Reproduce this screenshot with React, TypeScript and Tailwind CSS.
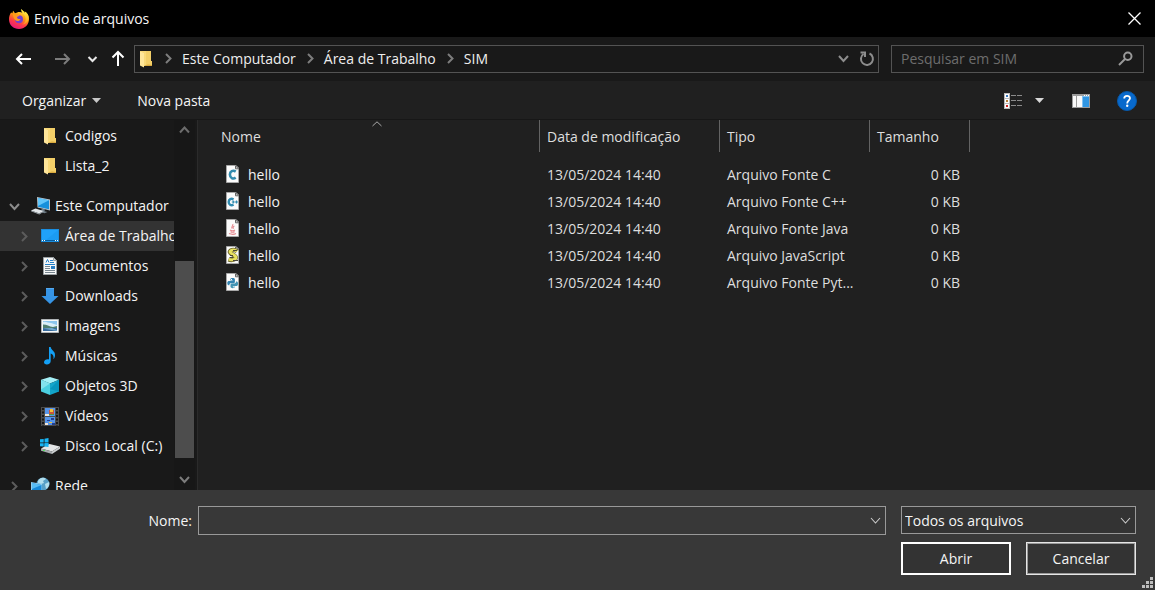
import type { ReactNode } from 'react';

type ChevronProps = { dir: 'up' | 'down' | 'right'; className: string; size?: 'thin' | 'bold' };

function Chevron({ dir, className, size = 'bold' }: ChevronProps) {
  const paths = { up: 'M2 8.500l4.500-5 4.500 5', down: 'M2 4l4.500 5L11 4', right: 'M4 2l4.500 4.500L4 11' };
  return (
    <svg width="13" height="13" viewBox="0 0 13 13" fill="none" stroke="currentColor" strokeWidth={size === 'bold' ? 2 : 1.1} className={className} aria-hidden="true">
      <path d={paths[dir]} />
    </svg>
  );
}

function FirefoxIcon() {
  return (
    <svg width="22" height="22" viewBox="0 0 22 22" aria-hidden="true">
      <defs>
        <linearGradient id="fox" x1="0.8" y1="0.05" x2="0.35" y2="1">
          <stop offset="0" stopColor="#fff44f" />
          <stop offset="0.4" stopColor="#ff980e" />
          <stop offset="0.7" stopColor="#ff3b47" />
          <stop offset="1" stopColor="#e5197c" />
        </linearGradient>
        <linearGradient id="foxTail" x1="0" y1="0" x2="0" y2="1">
          <stop offset="0" stopColor="#fff04a" />
          <stop offset="1" stopColor="#ffb020" stopOpacity="0.6" />
        </linearGradient>
      </defs>
      <path fill="url(#fox)" d="M13.600 1c-.6 1.700.1 3 1.300 4-1.700-1-3.800-1.300-5.700-.6L7 5.200 5.200 2.800C4.700 3.500 4.500 4.300 4.500 5.200L3.100 4.500C1.900 6.100 1 8.500 1 11.200 1 17 5.400 21 11 21s10-4.300 10-10c0-3.400-1.700-6.200-4.300-7.400.2.700.1 1.300 0 1.800C16.400 3.300 14.200 2.800 13.600 1z" />
      <path fill="url(#foxTail)" d="M13.600 1c-1 3.300 3.100 4.700 3.900 8.500.7 3.400-1 6-3.300 7 4-.4 6.500-3.300 6.500-6.700 0-2.700-1.700-5-4-6.200.1.700.1 1.200 0 1.700C16.200 3.400 14.200 2.800 13.600 1z" />
      <circle cx="11" cy="11.300" r="4" fill="#7540d0" />
      <path fill="#ff9a1f" d="M4.800 6.200c1.700-.8 3-.4 4.200.4l2.600.3c.2 1.200-2.500 1.500-2.700 2.400.2 1.400 1.900 2.200 3.600 1.600-.8 2.300-3.600 2.800-5.300 1.100C5.700 10.600 5 8.200 4.800 6.200z" />
    </svg>
  );
}

function FolderIcon() {
  return (
    <svg width="18" height="18" viewBox="0 0 18 18" aria-hidden="true">
      <path fill="#f3cf68" d="M3 1h11v10h1v5H6z" />
      <path fill="#d9aa3f" d="M11 14.500l4 .5v1H6z" />
      <path fill="#ffe69a" d="M3 1l4 2v14.500L3 15.500z" />
      <path fill="#f9d978" d="M7 3l-4-2h6v13.500L7 16z" />
    </svg>
  );
}

function ComputerIcon() {
  return (
    <svg width="20" height="18" viewBox="0 0 20 18" aria-hidden="true">
      <path fill="#b9c8d2" d="M6 0l13 2.500v11L6.500 10.500z" />
      <path fill="#1590dc" d="M7 1l11 2.300v9L7 9.800z" />
      <path fill="#62c6fa" d="M7 1l11 2.300L7 9z" />
      <path fill="#6e7c86" d="M11 11.500l3 .8-.5 2 3 .7-3 1.300-4-1.300z" />
      <path fill="#e2e6e9" d="M0 13.500l4.500-2 8 2.500-4.200 2.500z" />
      <path fill="#a4adb3" d="M0 13.500l8.300 3 4.200-2.500v.8L8.300 17.500 0 14.300z" />
    </svg>
  );
}

function DesktopIcon() {
  return (
    <svg width="18" height="14" viewBox="0 0 18 14" aria-hidden="true">
      <path fill="#1a8ee0" d="M0 0h18v13H0z" />
      <path fill="#20a2fa" d="M1 1h16v10H1z" />
      <path fill="#1b9bf2" d="M17 1v10H5z" />
      <path fill="#075b9b" d="M1 11h16v1H1z" />
      <path fill="#fff" d="M1 11h1v1H1zm2 0h1v1H3zm11 0h1v1h-1zm2 0h1v1h-1z" />
    </svg>
  );
}

function DocumentIcon() {
  return (
    <svg width="18" height="18" viewBox="0 0 18 18" aria-hidden="true">
      <path fill="#f7f8f8" stroke="#9aa0a4" d="M2.500.5h10l3 3v14h-13z" />
      <path fill="#d4d8da" stroke="#9aa0a4" d="M12.500.5v3h3z" />
      <path fill="none" stroke="#2480c8" d="M5 5.500l1.500-3 1.500 3M9 3.500h3M9 5.500h4M4 7.500h10" />
      <path fill="none" stroke="#77858f" d="M4 9.500h5M4 11.500h5M4 13.500h10M4 15.500h10" />
      <path fill="#2a7ec4" d="M10 9h4v3h-4z" />
    </svg>
  );
}

function DownloadIcon() {
  return (
    <svg width="18" height="18" viewBox="0 0 18 18" aria-hidden="true">
      <path fill="#3694e5" d="M5 1h8v8h4.500L9 17 .5 9H5z" />
      <path fill="#55a9ee" d="M5 1h8v1H5z" />
    </svg>
  );
}

function PictureIcon() {
  return (
    <svg width="18" height="14" viewBox="0 0 18 14" aria-hidden="true">
      <path fill="#f6f7f7" stroke="#afb4b7" d="M.5.5h17v13H.5z" />
      <path fill="#8cc5ed" d="M2 2h14v10H2z" />
      <path fill="#d9edf8" d="M2 3c3-1 5 1 8 1l6 2v2H2z" />
      <path fill="#507f70" d="M2 5.500c4 0 6 2 10 2.500l4-1v2H2z" />
      <path fill="#376b9e" d="M2 9h14v3H2z" />
      <path fill="#75aacc" d="M2 9.500l9-.5 5 2v1z" />
    </svg>
  );
}

function MusicIcon() {
  return (
    <svg width="18" height="18" viewBox="0 0 18 18" aria-hidden="true">
      <path fill="#14a0f5" d="M8 0h1.700c.4 3.300 4.600 4 4.300 8.200 0 1.600-.7 3-1.600 4 .6-3.300-.4-4.700-2.700-5.700v7.400c0 2-1.700 3.600-3.900 3.600-1.700 0-2.800-.9-2.800-2.200 0-1.700 1.800-3 3.700-3 .5 0 .9.100 1.300.2z" />
    </svg>
  );
}

function CubeIcon() {
  return (
    <svg width="18" height="18" viewBox="0 0 18 18" aria-hidden="true">
      <path fill="#a5f0f7" d="M9 0l9 2.800L9 6.500 0 2.800z" />
      <path fill="#4bcfe0" d="M0 2.800l9 3.700V18l-9-3.500z" />
      <path fill="#13a5ca" d="M18 2.800L9 6.500V18l9-3.500z" />
      <path fill="#82e2ed" d="M0 2.800l9 3.700-9 6z" />
      <path fill="#0795bd" d="M18 2.800v11.700L9 12z" />
    </svg>
  );
}

function VideoIcon() {
  return (
    <svg width="18" height="19" viewBox="0 0 18 19" aria-hidden="true">
      <path fill="#4b4b4b" d="M0 0h18v19H0z" />
      <path stroke="#161616" strokeWidth="2" strokeDasharray="2 1.500" d="M2 1v18M16 1v18" />
      <path fill="#5795e8" d="M4 1h10v8H4zM4 10h10v8H4z" />
      <path fill="#c9553b" d="M8 3h5v4H8z" />
      <path fill="#efc13b" d="M9 2h3v3H9zM8 15h3v1H8z" />
      <path fill="#4e9644" d="M8 7h5v1H8z" />
      <path fill="#f2e6d8" d="M4 7h4v2H4zM4 16h3v2H4z" />
      <path fill="#233f91" d="M10 11h3v2h-3zM6 13h3v1H6zM11 16h3v2h-3z" />
    </svg>
  );
}

function DiskIcon() {
  return (
    <svg width="20" height="16" viewBox="0 0 20 16" aria-hidden="true">
      <path fill="#17b5f5" d="M0 1.300L3.700 1v3.500H0zM4.500.8L8.500 0v4.500h-4zM0 5.300h3.700v3.200L0 8.200zM4.500 5.300h4V9l-4-.5z" />
      <path fill="#e4e6e7" d="M1 10.500L9.500 6 20 8.500l-8 5z" />
      <path fill="#a7abae" d="M1 10.500l11 3v2.500L1 12.700z" />
      <path fill="#cbced0" d="M12 13.500l8-5v2.300L12 16z" />
      <path fill="#17b5f5" d="M4.500 5.300h4V9l-4-.5z" />
      <path fill="#5cdf66" d="M3 12h2v1H3z" />
    </svg>
  );
}

function NetworkIcon() {
  return (
    <svg width="20" height="18" viewBox="0 0 20 18" aria-hidden="true">
      <circle cx="12" cy="7" r="6.500" fill="#579fc6" />
      <path fill="#b2deed" d="M7 4c2-4 6-4 8-2l-3 2 1 2-3 1-3-1zM14 7l4-2c1 3-1 6-3 7z" />
      <path fill="#8fcdf0" d="M0 5l11 2v10L0 14z" />
      <path fill="#1688d8" d="M1 6l9.500 2v7.500L1 13z" />
      <path fill="#58bcf4" d="M1 6l9.500 2L1 12z" />
      <path fill="#aab9c1" d="M8 16l5 1-4 1-5-1z" />
    </svg>
  );
}

function Sheet({ children }: { children: ReactNode }) {
  return (
    <svg width="16" height="19" viewBox="0 0 16 19" fill="none" className="shrink-0" aria-hidden="true">
      <path fill="#fbfbfb" stroke="#a8a8a8" d="M1.500.5h9.500l2.500 2.500v14.500h-12z" />
      <path fill="#ddd" stroke="#666" d="M10.500.8v3h3z" />
      {children}
    </svg>
  );
}

const glyphs: Record<string, ReactNode> = {
  c: <path stroke="#348caf" strokeWidth="2.600" d="M10.700 6.600C8 4.800 4.900 6.300 4.900 9.600s3.100 4.900 5.800 3" />,
  cpp: (
    <>
      <path stroke="#318cb1" strokeWidth="2.400" d="M8.500 7.500C6.300 5.900 3.700 7.100 3.700 10s2.600 4.100 4.800 2.500" />
      <path stroke="#318cb1" strokeWidth="1.200" d="M6.800 10h3M8.300 8.500v3M10 10h3M11.500 8.500v3" />
    </>
  ),
  java: (
    <path stroke="#e58b91" strokeWidth="1.100" d="M7.800 5c.8 1.800-2.300 2.500-.6 4.700M9.400 7c-1.800.9-1.500 1.500-.8 2.600M5 11c1.300.7 4 .7 5 0M5.500 12.800c1 .5 3 .5 4.200 0M4 14.600c2.300.9 5.500.8 7 0" />
  ),
  js: (
    <>
      <path stroke="#706a30" strokeWidth="4.400" strokeLinejoin="round" d="M12 5.300C8.700 2.700 4.200 4.200 5 6.300c.6 1.700 5 2.600 5.700 4.800.4 2.700-4.200 3.400-7.200 2.300" />
      <path stroke="#e8e160" strokeWidth="2.800" d="M12 5.300C8.700 2.700 4.500 4.300 5.200 6.200c.6 1.700 5 2.600 5.700 4.800.4 2.700-4.200 3.400-7.200 2.300" />
      <path stroke="#484637" d="M8 4.500h4M5 9.500h3M8 14.500h5M5 11.500h3" />
    </>
  ),
  py: (
    <>
      <path fill="#3485b2" d="M5.300 6.500c0-1.900 4.600-1.900 4.600 0V9c0 .9-.9 1.300-1.800 1.300H6.100c-1.100 0-1.700.6-1.700 1.900H3.600c-1.700 0-1.700-4.200 0-4.200h4v-.5H5.300z" />
      <path fill="#4294b4" d="M10.100 13.700c0 1.900-4.600 1.900-4.600 0v-2c0-.9.900-1.300 1.800-1.300h2c1.100 0 1.700-.6 1.700-1.900h.8c1.700 0 1.700 4.500 0 4.500h-4v.5h2.300z" />
      <path fill="#fff" d="M6 6h1v1H6zM8.400 13.400h1v1h-1z" />
    </>
  ),
};

const places = [
  { label: 'Área de Trabalho', icon: <DesktopIcon />, selected: true },
  { label: 'Documentos', icon: <DocumentIcon /> },
  { label: 'Downloads', icon: <DownloadIcon /> },
  { label: 'Imagens', icon: <PictureIcon /> },
  { label: 'Músicas', icon: <MusicIcon /> },
  { label: 'Objetos 3D', icon: <CubeIcon /> },
  { label: 'Vídeos', icon: <VideoIcon /> },
  { label: 'Disco Local (C:)', icon: <DiskIcon /> },
];

const files = [
  { kind: 'c', type: 'Arquivo Fonte C' },
  { kind: 'cpp', type: 'Arquivo Fonte C++' },
  { kind: 'java', type: 'Arquivo Fonte Java' },
  { kind: 'js', type: 'Arquivo JavaScript' },
  { kind: 'py', type: 'Arquivo Fonte Pyt...' },
];

function TreeItem({ label, icon, level, arrow, selected }: { label: string; icon: ReactNode; level: 1 | 2; arrow?: 'right' | 'down'; selected?: boolean }) {
  return (
    <li>
      <button
        type="button"
        className={`flex h-[30px] w-full items-center overflow-hidden whitespace-nowrap text-left ${level === 1 ? 'pl-2' : 'pl-[18px]'} ${selected ? 'bg-[#333333]' : ''}`}
      >
        <span className="w-[13px] shrink-0">
          {arrow && <Chevron dir={arrow} className={arrow === 'down' ? 'text-[#8c8c8c]' : 'text-[#5c5c5c]'} />}
        </span>
        <span className={`flex w-5 shrink-0 items-center justify-center ${level === 1 ? 'ml-[10px]' : 'ml-[9px]'}`}>{icon}</span>
        <span className={level === 1 ? 'ml-1' : 'ml-[5px]'}>{label}</span>
      </button>
    </li>
  );
}

function TitleBar() {
  return (
    <header className="flex h-[37px] shrink-0 items-center bg-black pl-2">
      <FirefoxIcon />
      <h1 className="ml-1">Envio de arquivos</h1>
      <button type="button" aria-label="Fechar" className="ml-auto flex h-full w-[41px] items-center justify-center">
        <svg width="13" height="13" viewBox="0 0 13 13" stroke="#fff" strokeWidth="1.300" aria-hidden="true">
          <path d="M.5.5l12 12M12.500.5l-12 12" />
        </svg>
      </button>
    </header>
  );
}

function NavigationBar() {
  return (
    <nav className="flex h-11 shrink-0 items-center bg-[#191919] pr-[11px] pb-px pl-[15px]">
      <button type="button" aria-label="Voltar">
        <svg width="17" height="14" viewBox="0 0 17 14" fill="none" stroke="#fff" strokeWidth="2" aria-hidden="true">
          <path d="M16 7H2M7 2L2 7l5 5" />
        </svg>
      </button>
      <button type="button" aria-label="Avançar" className="ml-[22px]">
        <svg width="17" height="14" viewBox="0 0 17 14" fill="none" stroke="#7c7c7c" strokeWidth="2" aria-hidden="true">
          <path d="M1 7h14M10 2l5 5-5 5" />
        </svg>
      </button>
      <button type="button" aria-label="Locais recentes" className="ml-4">
        <svg width="11" height="8" viewBox="0 0 11 8" fill="none" stroke="#e8e8e8" strokeWidth="2" aria-hidden="true">
          <path d="M1.500 2l4 4 4-4" />
        </svg>
      </button>
      <button type="button" aria-label="Acima" className="ml-[13px]">
        <svg width="14" height="17" viewBox="0 0 14 17" fill="none" stroke="#fff" strokeWidth="2" aria-hidden="true">
          <path d="M7 16V2M1.500 7.500L7 2l5.500 5.500" />
        </svg>
      </button>
      <div className="ml-[9px] flex h-7 min-w-0 flex-1 items-center border border-[#535353] pl-[2px]">
        <FolderIcon />
        <ol className="ml-[7px] flex items-center whitespace-nowrap text-[#eeeeee]">
          {['Este Computador', 'Área de Trabalho', 'SIM'].map((part) => (
            <li key={part} className="flex items-center">
              <Chevron dir="right" className="mr-[7px] text-[#7d7d7d]" />
              <button type="button" className="mr-2">{part}</button>
            </li>
          ))}
        </ol>
        <button type="button" aria-label="Locais anteriores" className="ml-auto flex w-[26px] justify-center">
          <Chevron dir="down" className="text-[#8d8d8d]" />
        </button>
        <button type="button" aria-label="Atualizar" className="flex w-[22px] justify-center">
          <svg width="16" height="16" viewBox="0 0 16 16" fill="none" stroke="#8d8d8d" strokeWidth="2" aria-hidden="true">
            <path d="M10.500 2.500A6 6 0 1 1 4.500 3M1.500 1.500h4.500v4.500" />
          </svg>
        </button>
      </div>
      <label className="ml-3 flex h-7 w-[253px] items-center border border-[#535353] pr-[10px] pl-[9px]">
        <input type="search" aria-label="Pesquisar em SIM" placeholder="Pesquisar em SIM" className="min-w-0 flex-1 bg-transparent outline-none placeholder:text-[#6d6d6d]" />
        <svg width="15" height="15" viewBox="0 0 15 15" fill="none" stroke="#999" strokeWidth="2" aria-hidden="true">
          <circle cx="9.800" cy="5.200" r="3.700" />
          <path d="M7 8l-6 6" />
        </svg>
      </label>
    </nav>
  );
}

function Toolbar() {
  return (
    <div className="flex h-[39px] shrink-0 items-center border-b border-[#171717] bg-[#202020] pt-px pr-[18px] pl-[22px]">
      <button type="button" className="flex items-center gap-[6px]">
        Organizar
        <svg width="9" height="5" viewBox="0 0 9 5" fill="#c8c8c8" aria-hidden="true"><path d="M0 0h9L4.500 5z" /></svg>
      </button>
      <button type="button" className="ml-9">Nova pasta</button>
      <button type="button" aria-label="Alterar modo de exibição" className="ml-auto">
        <svg width="19" height="16" viewBox="0 0 19 16" aria-hidden="true">
          <path fill="#bcbcbc" d="M0 0h6v16H0z" />
          <path fill="#fff" d="M1 1h4v4H1zm0 5h4v4H1zm0 5h4v4H1z" />
          <path fill="#3978bd" d="M2 2h2v2H2z" />
          <path fill="#b6803b" d="M2 7h2v2H2z" />
          <path fill="#cf2424" d="M2 12h2v2H2z" />
          <path stroke="#8b8b8b" strokeDasharray="5 1" d="M7 2.500h11M7 7.500h11M7 12.500h11" />
        </svg>
      </button>
      <button type="button" aria-label="Mais opções" className="ml-3">
        <svg width="9" height="5" viewBox="0 0 9 5" fill="#d8d8d8" aria-hidden="true"><path d="M0 0h9L4.500 5z" /></svg>
      </button>
      <button type="button" aria-label="Mostrar o painel de visualização" className="ml-7">
        <svg width="18" height="14" viewBox="0 0 18 14" aria-hidden="true">
          <path fill="#9c9c9c" d="M0 0h18v14H0z" />
          <path fill="#fafafa" d="M1 2h3v11H1zm4 0h5v11H5z" />
          <path fill="#7fc0f2" d="M10 2h7v11h-7z" />
          <path fill="#3096e3" d="M11 3h6v10h-6z" />
          <path fill="#fff" d="M12 1h1v1h-1zm2 0h1v1h-1zm2 0h1v1h-1z" />
        </svg>
      </button>
      <button type="button" aria-label="Ajuda" className="ml-[27px]">
        <svg width="20" height="20" viewBox="0 0 20 20" fill="none" aria-hidden="true">
          <circle cx="10" cy="10" r="9.500" fill="#0869cc" stroke="#0759aa" />
          <path stroke="#fff" strokeWidth="1.800" d="M7.200 7.400c0-3.400 5.800-3.300 5.800-.2 0 2-2.800 2.300-2.800 5.200" />
          <circle cx="10.200" cy="14.800" r="1.200" fill="#fff" />
        </svg>
      </button>
    </div>
  );
}

function Sidebar() {
  return (
    <aside className="flex w-[198px] shrink-0 bg-[#191919]">
      <ul className="min-w-0 flex-1 overflow-hidden pt-px">
        <TreeItem level={2} label="Codigos" icon={<FolderIcon />} />
        <TreeItem level={2} label="Lista_2" icon={<FolderIcon />} />
        <li className="h-[10px]" aria-hidden="true" />
        <TreeItem level={1} arrow="down" label="Este Computador" icon={<ComputerIcon />} />
        {places.map((p) => (
          <TreeItem key={p.label} level={2} arrow="right" label={p.label} icon={p.icon} selected={p.selected} />
        ))}
        <li className="h-[10px]" aria-hidden="true" />
        <TreeItem level={1} arrow="right" label="Rede" icon={<NetworkIcon />} />
      </ul>
      <div className="flex w-[21px] flex-col items-center bg-[#171717]" aria-hidden="true">
        <Chevron dir="up" className="my-1 shrink-0 text-[#6c6c6c]" />
        <div className="flex w-full flex-1 flex-col justify-end pl-px">
          <div className="h-[62%] w-[19px] bg-[#4d4d4d]" />
        </div>
        <Chevron dir="down" className="mt-[15px] mb-1 shrink-0 text-[#7c7c7c]" />
      </div>
      <div className="w-[3px] border-r border-[#2b2b2b]" />
    </aside>
  );
}

function FileList() {
  return (
    <main className="min-w-0 flex-1 overflow-hidden bg-[#202020] text-[#dedede]">
      <table className="w-[772px] table-fixed border-separate border-spacing-0 whitespace-nowrap">
        <colgroup>
          <col className="w-[342px]" />
          <col className="w-[180px]" />
          <col className="w-[150px]" />
          <col className="w-[100px]" />
        </colgroup>
        <thead>
          <tr className="h-8 text-left">
            <th className="relative border-r border-[#636363] p-0 pt-px pl-[23px] font-normal">
              Nome
              <svg width="10" height="6" viewBox="0 0 10 6" fill="none" stroke="#aaa" className="absolute top-px left-[174px]" aria-hidden="true">
                <path d="M.5 5L5 .8 9.500 5" />
              </svg>
            </th>
            <th className="border-r border-[#636363] p-0 pt-px pl-[7px] font-normal">Data de modificação</th>
            <th className="border-r border-[#636363] p-0 pt-px pl-[7px] font-normal">Tipo</th>
            <th className="border-r border-[#636363] p-0 pt-px pl-[7px] font-normal">Tamanho</th>
          </tr>
        </thead>
        <tbody>
          <tr aria-hidden="true" className="h-[9px]"><td colSpan={4} className="p-0" /></tr>
          {files.map((f) => (
            <tr key={f.kind} className="h-[27px]">
              <td className="p-0 pl-[27px]">
                <span className="flex items-center gap-[7px] text-[#f2f2f2]">
                  <Sheet>{glyphs[f.kind]}</Sheet>
                  hello
                </span>
              </td>
              <td className="p-0 pl-[7px]">13/05/2024 14:40</td>
              <td className="p-0 pl-[7px]">{f.type}</td>
              <td className="p-0 pr-[10px] text-right">0 KB</td>
            </tr>
          ))}
        </tbody>
      </table>
    </main>
  );
}

function Footer() {
  return (
    <footer className="relative shrink-0 bg-[#383838] pt-4 pr-[19px] pb-[15px]">
      <div className="flex items-start">
        <label htmlFor="file-name" className="w-48 shrink-0 text-right leading-[29px]">Nome:</label>
        <div className="ml-[6px] flex h-[29px] min-w-0 flex-1 items-center border border-[#999999]">
          <input id="file-name" type="text" className="h-full min-w-0 flex-1 bg-transparent px-1 outline-none" />
          <button type="button" aria-label="Nomes anteriores" className="mr-[3px]">
            <Chevron dir="down" size="thin" className="text-[#cccccc]" />
          </button>
        </div>
        <div className="relative ml-[15px] w-[235px] shrink-0">
          <select aria-label="Tipo de arquivo" className="block h-7 w-full appearance-none border border-[#999999] bg-[#333333] pt-px pl-[3px] outline-none">
            <option>Todos os arquivos</option>
          </select>
          <Chevron dir="down" size="thin" className="pointer-events-none absolute top-2 right-1 text-[#cccccc]" />
        </div>
      </div>
      <div className="mt-[7px] flex justify-end gap-[15px]">
        <button type="button" className="h-[33px] w-[110px] border-2 border-white bg-[#333333]">Abrir</button>
        <button type="button" className="h-[33px] w-[110px] border border-[#e6e6e6] bg-[#333333] inset-ring inset-ring-[#999999]">Cancelar</button>
      </div>
      <svg width="11" height="11" viewBox="0 0 11 11" fill="#bdbdbd" className="absolute right-[2px] bottom-[2px]" aria-hidden="true">
        <path d="M8 0h3v3H8zM4 4h3v3H4zM8 4h3v3H8zM0 8h3v3H0zM4 8h3v3H4zM8 8h3v3H8z" />
      </svg>
    </footer>
  );
}

export default function App() {
  return (
    <div className="flex h-screen flex-col overflow-hidden bg-[#202020] font-['Open_Sans','Noto_Sans',sans-serif] text-sm leading-5 text-[#f5f5f5]">
      <TitleBar />
      <NavigationBar />
      <Toolbar />
      <div className="flex min-h-0 flex-1">
        <Sidebar />
        <FileList />
      </div>
      <Footer />
    </div>
  );
}
